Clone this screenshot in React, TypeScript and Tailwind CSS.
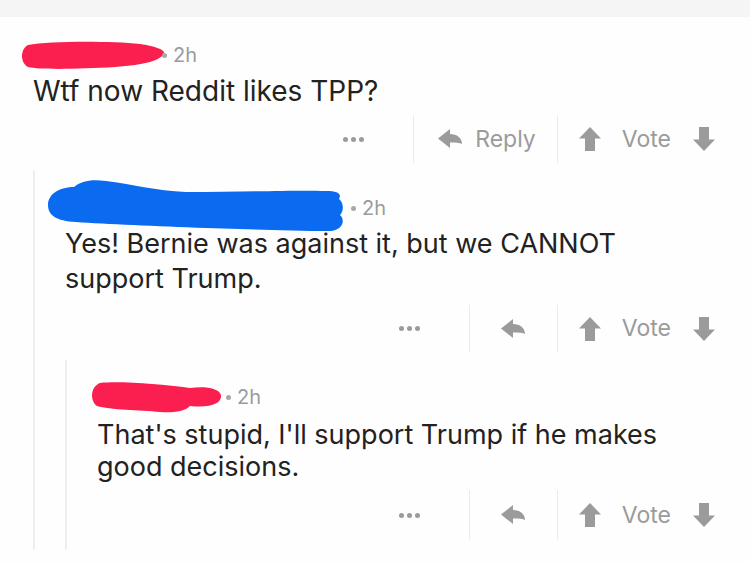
import React from "react";

const GRAY = "#9b9b9b";

function UpArrow() {
  return (
    <svg width="22" height="24" viewBox="0 0 22 24" className="block">
      <path d="M11 0 L22 11.5 L16 11.5 L16 24 L6 24 L6 11.5 L0 11.5 Z" fill={GRAY} />
    </svg>
  );
}

function DownArrow() {
  return (
    <svg width="22" height="24" viewBox="0 0 22 24" className="block">
      <path d="M11 24 L22 12.5 L16 12.5 L16 0 L6 0 L6 12.5 L0 12.5 Z" fill={GRAY} />
    </svg>
  );
}

function ReplyArrow() {
  return (
    <svg width="24" height="20" viewBox="0 0 24 20" className="block">
      <path
        d="M0 9.5 L12 0 L12 5 C19 5 24 9 24 15 C22 13.5 18 13.5 12 13.5 L12 19 Z"
        fill={GRAY}
      />
    </svg>
  );
}

function Dots() {
  return (
    <div className="flex items-center gap-[3px]">
      <span className="block w-[5px] h-[5px] rounded-full bg-[#9b9b9b]" />
      <span className="block w-[5px] h-[5px] rounded-full bg-[#9b9b9b]" />
      <span className="block w-[5px] h-[5px] rounded-full bg-[#9b9b9b]" />
    </div>
  );
}

function Divider() {
  return <div className="w-px h-full bg-[#ebebeb]" />;
}

function Actions({ withText, height, mt }: { withText: boolean; height: string; mt: string }) {
  return (
    <div className={`flex justify-end items-center ${height} ${mt}`}>
      <div className="mr-[49px]">
        <Dots />
      </div>
      <Divider />
      {withText ? (
        <div className="flex items-center pl-[24px] pr-[21px]">
          <ReplyArrow />
          <span className="ml-[13px] text-[23px] text-[#9b9b9b] leading-none">Reply</span>
        </div>
      ) : (
        <div className="flex items-center justify-center w-[87px]">
          <ReplyArrow />
        </div>
      )}
      <Divider />
      <div className="flex items-center pl-[21px]">
        <UpArrow />
        <span className="ml-[21px] mr-[22px] text-[23px] text-[#9b9b9b] leading-none">Vote</span>
        <DownArrow />
      </div>
    </div>
  );
}

function Meta() {
  return (
    <span className="flex items-center text-[20px] text-[#9b9b9b] leading-none">
      <span className="block w-[5px] h-[5px] rounded-full bg-[#a8a8a8] mr-[6px]" />
      2h
    </span>
  );
}

export default function App() {
  return (
    <div className="w-[750px] h-[564px] bg-[#fefefe] overflow-hidden font-['Inter','Roboto',sans-serif] text-[#222222]">
      <div className="h-[17px] bg-[#f5f5f5]" />
      <div className="pl-[33px] pr-[35px]">
        {/* Comment 1 */}
        <div className="mt-[20px] h-[36px] flex items-center">
          <svg width="145" height="28" viewBox="0 0 145 28" className="block -ml-[13px] -mr-[3px]">
            <path
              d="M8 4 C30 0 90 0 120 3 C135 5 145 9 144 12 C142 19 125 24 95 26 C60 28 20 29 8 26 C0 22 0 8 8 4 Z"
              fill="#fb1f50"
            />
          </svg>
          <Meta />
        </div>
        <div className="text-[28px] leading-[36px]">Wtf now Reddit likes TPP?</div>
        <Actions withText={true} height="h-[48px]" mt="mt-[6px]" />

        {/* Comment 2 */}
        <div className="mt-[7px] border-l-2 border-[#efefef] pl-[30px]">
          <div className="pt-[20px] h-[56px] flex items-center">
            <svg width="300" height="53" viewBox="0 0 300 53" className="block -ml-[19px] mr-[5px] -mt-[6px]">
              <path
                d="M2 26 C2 14 15 8 28 8 C35 2 45 0 60 2 C85 5 110 12 140 13 C200 13 250 11 280 12 C292 12 296 15 293 20 C298 24 298 32 294 36 C299 40 298 50 285 52 C240 52 200 50 160 49 C110 47 60 45 30 43 C10 42 2 36 2 26 Z"
                fill="#0a6bf0"
              />
            </svg>
            <Meta />
          </div>
          <div className="text-[27px] leading-[35px]">
            Yes! Bernie was against it, but we CANNOT
            <br />
            support Trump.
          </div>
          <Actions withText={false} height="h-[47px]" mt="mt-[9px]" />

          {/* Comment 3 */}
          <div className="mt-[8px] border-l-2 border-[#efefef] pl-[30px] pb-[10px]">
            <div className="pt-[19px] h-[55px] flex items-center">
              <svg width="132" height="32" viewBox="0 0 132 32" className="block -ml-[7px] mr-[4px]">
                <path
                  d="M10 2 C30 0 70 3 100 7 C115 5 129 7 131 14 C132 23 120 27 100 25 C95 31 80 32 70 31 C50 29 20 29 7 25 C0 20 0 6 10 2 Z"
                  fill="#fb1f50"
                />
              </svg>
              <Meta />
            </div>
            <div className="mt-[4px] text-[27px] leading-[32px]">
              That's stupid, I'll support Trump if he makes
              <br />
              good decisions.
            </div>
            <Actions withText={false} height="h-[50px]" mt="mt-[7px]" />
          </div>
        </div>
      </div>
    </div>
  );
}
